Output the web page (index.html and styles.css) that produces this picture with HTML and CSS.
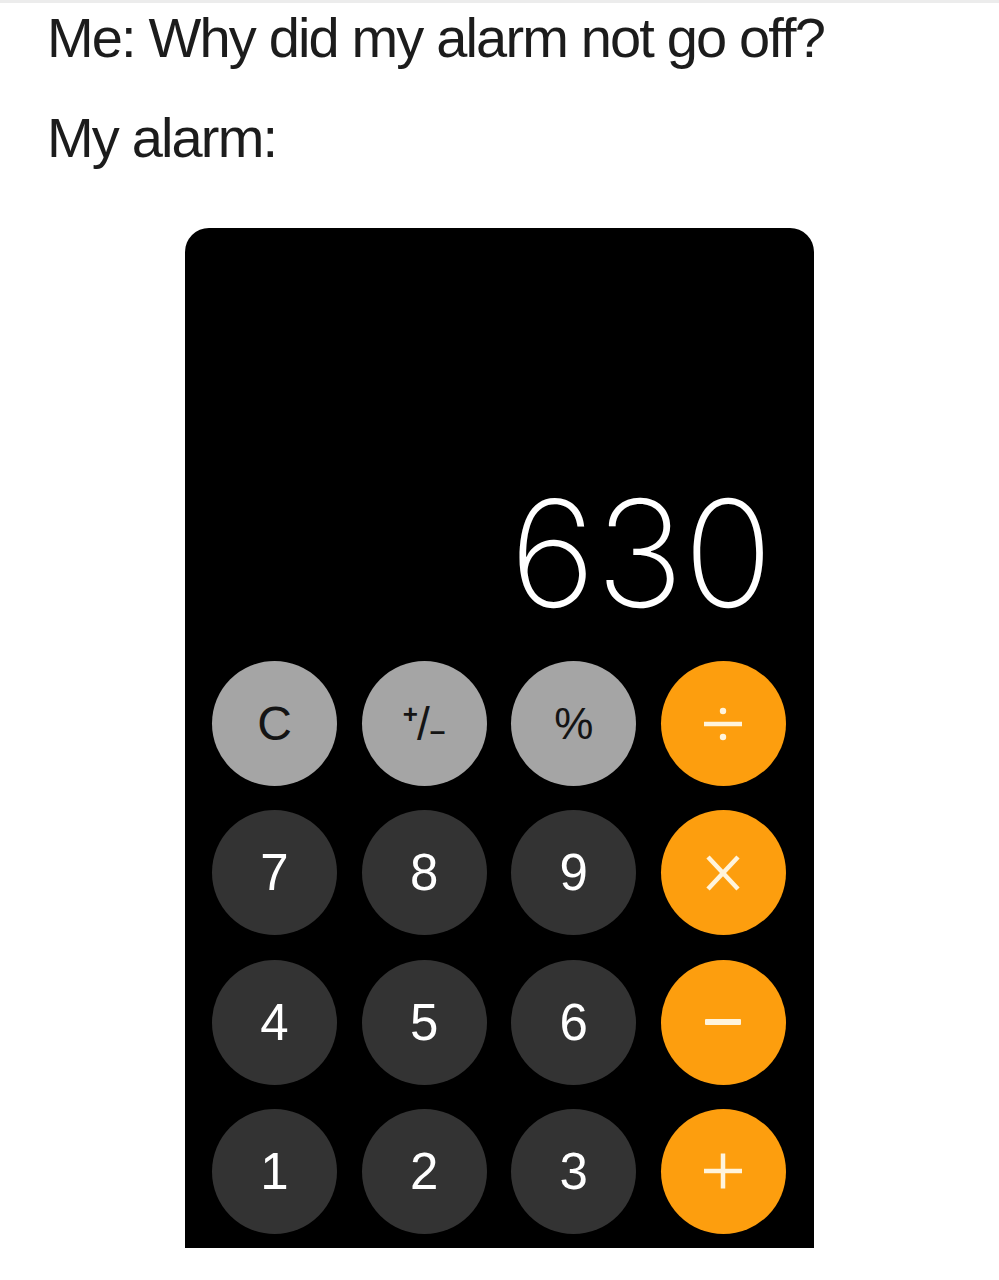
FILE: index.html
```html
<!DOCTYPE html>
<html>
<head>
<meta charset="utf-8">
<link rel="stylesheet" href="styles.css">
</head>
<body>
<div class="meme">
  <p class="line line-1">Me: Why did my alarm not go off?</p>
  <p class="line line-2">My alarm:</p>
  <div class="calc">
    <div class="display">630</div>
    <div class="keys">
      <div class="key fn">C</div>
      <div class="key fn pm"><span class="pm-text"><span class="sup">+</span>/<span class="sub">–</span></span></div>
      <div class="key fn pct">%</div>
      <div class="key op" aria-label="÷">
        <svg class="op-icon" width="40" height="40" viewBox="0 0 40 40">
          <line x1="1" y1="20" x2="39" y2="20" stroke="currentColor" stroke-width="4.5"/>
          <circle cx="20" cy="7" r="3.2" fill="currentColor"/>
          <circle cx="20" cy="33" r="3.2" fill="currentColor"/>
        </svg>
      </div>
      <div class="key num">7</div>
      <div class="key num">8</div>
      <div class="key num">9</div>
      <div class="key op" aria-label="×">
        <svg class="op-icon" width="40" height="40" viewBox="0 0 40 40">
          <line x1="5" y1="4" x2="35" y2="36" stroke="currentColor" stroke-width="4.5"/>
          <line x1="35" y1="4" x2="5" y2="36" stroke="currentColor" stroke-width="4.5"/>
        </svg>
      </div>
      <div class="key num">4</div>
      <div class="key num">5</div>
      <div class="key num">6</div>
      <div class="key op" aria-label="−">
        <svg class="op-icon" width="40" height="40" viewBox="0 0 40 40">
          <rect x="2" y="17" width="36" height="6" rx="1" fill="currentColor"/>
        </svg>
      </div>
      <div class="key num">1</div>
      <div class="key num">2</div>
      <div class="key num">3</div>
      <div class="key op" aria-label="+">
        <svg class="op-icon" width="40" height="40" viewBox="0 0 40 40">
          <line x1="1" y1="20" x2="39" y2="20" stroke="currentColor" stroke-width="4.5"/>
          <line x1="20" y1="2.5" x2="20" y2="37.5" stroke="currentColor" stroke-width="4.5"/>
        </svg>
      </div>
    </div>
  </div>
</div>
</body>
</html>
```

FILE: styles.css
```css
html, body {
  margin: 0;
  padding: 0;
  background: #ffffff;
}

.meme {
  width: 999px;
  height: 1280px;
  border-top: 3px solid #ececec;
  box-sizing: border-box;
  font-family: "Liberation Sans", Arial, sans-serif;
  overflow: hidden;
}

.line {
  margin: 0;
  padding-left: 47px;
  font-size: 56px;
  letter-spacing: -1.85px;
  color: #1c1c1c;
  line-height: 60px;
  white-space: nowrap;
}

.line-1 {
  margin-top: 5px;
}

.line-2 {
  margin-top: 40px;
}

.calc {
  margin-top: 60px;
  margin-left: 185px;
  width: 629px;
  height: 1020px;
  background: #000;
  border-radius: 24px 24px 0 0;
  box-sizing: border-box;
  padding: 0 27px 0 27px;
  display: flex;
  flex-direction: column;
}

.display {
  height: 433px;
  box-sizing: border-box;
  display: flex;
  align-items: flex-end;
  justify-content: flex-end;
  padding-right: 14px;
  padding-bottom: 33px;
  color: #ffffff;
  font-family: "Inter", "Liberation Sans", sans-serif;
  font-weight: 200;
  font-size: 148px;
  line-height: 1;
  letter-spacing: 0;
}

.keys {
  display: grid;
  grid-template-columns: repeat(4, 125px);
  grid-auto-rows: 125px;
  column-gap: 24.6px;
  row-gap: 24.3px;
}

.key {
  border-radius: 50%;
  display: flex;
  align-items: center;
  justify-content: center;
  font-family: "Liberation Sans", Arial, sans-serif;
  line-height: 1;
}

.fn {
  background: #a5a5a5;
  color: #141414;
  font-size: 48px;
}

.pct {
  font-size: 44px;
}

.pm .pm-text {
  font-size: 46px;
  white-space: nowrap;
}

.pm .sup {
  font-size: 26px;
  font-weight: bold;
  vertical-align: 17px;
  margin-right: -1px;
}

.pm .sub {
  font-size: 28px;
  font-weight: bold;
  vertical-align: 0;
}

.num {
  background: #333333;
  color: #ffffff;
  font-size: 51px;
}

.op {
  background: #fd9e0e;
  color: #fff4dc;
}

.op-icon {
  display: block;
}
```
